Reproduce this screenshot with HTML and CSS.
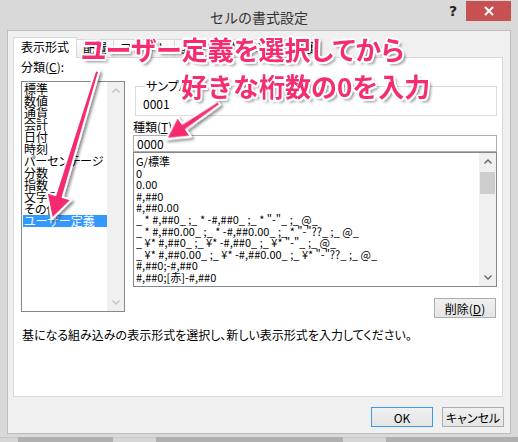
FILE: index.html
```html
<!DOCTYPE html>
<html lang="ja">
<head>
<meta charset="utf-8">
<title>セルの書式設定</title>
<link rel="stylesheet" href="styles.css">
</head>
<body>
<div class="window">
  <div class="titlebar">
    <div class="title">セルの書式設定</div>
    <div class="controls">
      <div class="help">?</div>
      <div class="close">
        <svg width="10" height="10" viewBox="0 0 10 10"><path d="M1 1 L9 9 M9 1 L1 9" stroke="#fff" stroke-width="2" fill="none"/></svg>
      </div>
    </div>
  </div>
  <div class="panel">
    <div class="tabs">
      <div class="tab active">表示形式</div>
      <div class="tab">配置</div>
      <div class="tab">フォント</div>
      <div class="tab">罫線</div>
      <div class="tab">塗りつぶし</div>
      <div class="tab">保護</div>
    </div>
    <div class="tabpage">
      <div class="cols">
        <div class="leftcol">
          <div class="label">分類(<u>C</u>):</div>
          <div class="listbox cat">
            <ul class="items">
              <li>標準</li>
              <li>数値</li>
              <li>通貨</li>
              <li>会計</li>
              <li>日付</li>
              <li>時刻</li>
              <li>パーセンテージ</li>
              <li>分数</li>
              <li>指数</li>
              <li>文字列</li>
              <li>その他</li>
              <li class="sel">ユーザー定義</li>
            </ul>
            <div class="vscroll disabled">
              <div class="arrow"><svg width="8" height="5" viewBox="0 0 8 5"><polyline points="0.5,4.5 4,1 7.5,4.5" fill="none" stroke="#c2c2c2" stroke-width="1.3"/></svg></div>
              <div class="track"></div>
              <div class="arrow"><svg width="8" height="5" viewBox="0 0 8 5"><polyline points="0.5,0.5 4,4 7.5,0.5" fill="none" stroke="#c2c2c2" stroke-width="1.3"/></svg></div>
            </div>
          </div>
        </div>
        <div class="rightcol">
          <fieldset class="sample">
            <legend>サンプル</legend>
            <div class="sample-value">0001</div>
          </fieldset>
          <div class="label type-label">種類(<u>T</u>):</div>
          <div class="textbox">0000</div>
          <div class="listbox fmt">
            <ul class="items">
              <li>G/標準</li>
              <li>0</li>
              <li>0.00</li>
              <li>#,##0</li>
              <li>#,##0.00</li>
              <li>_ * #,##0_ ;_ * -#,##0_ ;_ * "-"_ ;_ @_</li>
              <li>_ * #,##0.00_ ;_ * -#,##0.00_ ;_ * "-"??_ ;_ @_</li>
              <li>_ ¥* #,##0_ ;_ ¥* -#,##0_ ;_ ¥* "-"_ ;_ @_</li>
              <li>_ ¥* #,##0.00_ ;_ ¥* -#,##0.00_ ;_ ¥* "-"??_ ;_ @_</li>
              <li>#,##0;-#,##0</li>
              <li>#,##0;[赤]-#,##0</li>
            </ul>
            <div class="vscroll">
              <div class="arrow"><svg width="8" height="5" viewBox="0 0 8 5"><polyline points="0.5,4.5 4,1 7.5,4.5" fill="none" stroke="#606060" stroke-width="1.3"/></svg></div>
              <div class="thumb"></div>
              <div class="track"></div>
              <div class="arrow"><svg width="8" height="5" viewBox="0 0 8 5"><polyline points="0.5,0.5 4,4 7.5,0.5" fill="none" stroke="#606060" stroke-width="1.3"/></svg></div>
            </div>
          </div>
          <div class="btnrow"><button class="btn">削除(<u>D</u>)</button></div>
        </div>
      </div>
      <p class="desc">基になる組み込みの表示形式を選択し、新しい表示形式を入力してください。</p>
    </div>
    <div class="footer">
      <button class="btn ok">OK</button>
      <button class="btn">キャンセル</button>
    </div>
  </div>
  <div class="frame-bottom"></div>
  <div class="strip">
    <span class="seg s1"></span><span class="gap g1"></span><span class="seg s2"></span><span class="gap g2"></span><span class="seg s3"></span>
  </div>

  <div class="annot line1">ユーザー定義を選択してから</div>
  <div class="annot line2">好きな桁数の0を入力</div>

  <svg class="arrows" width="518" height="442" viewBox="0 0 518 442">
    <defs>
      <filter id="sh" x="-20%" y="-20%" width="140%" height="140%">
        <feDropShadow dx="2" dy="2" stdDeviation="1.5" flood-color="#000" flood-opacity="0.45"/>
      </filter>
    </defs>
    <g filter="url(#sh)" fill="#f52c70" stroke="#fff" stroke-width="2" stroke-linejoin="round">
      <polygon transform="translate(52,219) rotate(107)" points="-155,-2 -24,-3.8 -24,-13 0,0 -24,13 -24,3.8 -155,2"/>
      <polygon transform="translate(166,139) rotate(145.8)" points="-64,-2 -22,-3.6 -22,-12 0,0 -22,12 -22,3.6 -64,2"/>
    </g>
  </svg>
</div>
</body>
</html>
```

FILE: styles.css
```css
* { box-sizing: border-box; }
html, body { margin: 0; padding: 0; }
body {
  width: 518px;
  height: 442px;
  overflow: hidden;
  font-family: "Noto Sans CJK JP", sans-serif;
  font-size: 12px;
  color: #000;
  background: #d9d9d9;
}
.window {
  position: relative;
  width: 518px;
  height: 442px;
  background: #d9d9d9;
  display: flex;
  flex-direction: column;
}
.titlebar {
  flex: none;
  height: 30px;
  display: grid;
  grid-template-columns: 1fr auto 1fr;
}
.title {
  grid-column: 2;
  font-size: 14px;
  line-height: 30px;
  padding-top: 2px;
  color: #333;
}
.controls {
  grid-column: 3;
  display: flex;
  justify-content: flex-end;
  align-items: flex-start;
  padding-right: 7px;
}
.help {
  width: 26px;
  height: 21px;
  text-align: center;
  font: bold 14px/22px "DejaVu Sans", sans-serif;
  color: #222;
}
.close {
  width: 45px;
  height: 20px;
  margin-top: 1px;
  background: #c75050;
  display: flex;
  align-items: center;
  justify-content: center;
}
.close svg { display: block; }

.panel {
  flex: none;
  width: 504px;
  height: 404px;
  margin-left: 7px;
  border: 1px solid #bdbdbd;
  background: #f0f0f0;
  display: flex;
  flex-direction: column;
}
.tabs {
  flex: none;
  display: flex;
  align-items: flex-end;
  height: 20px;
  margin: 6px 0 0 5px;
  position: relative;
  z-index: 1;
}
.tab {
  height: 18px;
  padding: 0 6px;
  border: 1px solid #d9d9d9;
  border-bottom: none;
  margin-right: -1px;
  background: linear-gradient(#fcfcfc, #f0f0f0);
  line-height: 16px;
  font-size: 12px;
  white-space: nowrap;
}
.tab.active {
  height: 21px;
  margin-bottom: -1px;
  background: #fff;
  padding: 0 7px;
  line-height: 18px;
}
.tabpage {
  flex: none;
  height: 340px;
  margin: 0 7px 0 5px;
  border: 1px solid #d9d9d9;
  background: #fff;
}
.cols {
  display: flex;
  gap: 8px;
  padding-left: 7px;
}
.leftcol { width: 104px; flex: none; }
.rightcol { width: 364px; flex: none; display: flex; flex-direction: column; }
.label { line-height: 12px; height: 12px; margin-top: 3px; white-space: nowrap; }
.listbox {
  border: 1px solid #828790;
  background: #fff;
  display: flex;
  overflow: hidden;
}
.listbox.cat { margin-top: 8px; height: 231px; }
.items {
  list-style: none;
  margin: 0;
  flex: 1;
  min-width: 0;
  overflow: hidden;
}
.cat .items { padding: 1px 0 0 0; font-feature-settings: "palt"; }
.cat .items li {
  height: 12px;
  line-height: 12px;
  margin-left: 1px;
  padding-left: 1px;
  white-space: nowrap;
}
.cat .items li.sel { background: #3399ff; color: #fff; }
.vscroll {
  flex: none;
  width: 17px;
  background: #f0f0f0;
  display: flex;
  flex-direction: column;
}
.vscroll .arrow {
  flex: none;
  height: 17px;
  display: flex;
  align-items: center;
  justify-content: center;
}
.vscroll .arrow svg { display: block; }
.vscroll .track { flex: 1; }
.vscroll .thumb { flex: none; height: 22px; margin: 2px 1px 0; background: #cdcdcd; }

.sample {
  margin: 22px 0 0 2px;
  padding: 6px 7px 5px 7px;
  border: 1px solid #dcdcdc;
  min-width: 0;
}
.sample legend {
  padding: 0 1px;
  margin-left: 2px;
  line-height: 12px;
  font-size: 12px;
  font-feature-settings: "palt";
}
.sample-value { line-height: 12px; height: 12px; }
.type-label { margin-top: 5px; }
.textbox {
  margin-top: 2px;
  height: 17px;
  border: 1px solid #abadb3;
  padding-left: 3px;
  line-height: 15px;
  background: #fff;
}
.listbox.fmt { height: 135px; }
.fmt .items { padding: 3px 0 0 2px; font-size: 11px; }
.fmt .items li {
  height: 11.6px;
  line-height: 11.6px;
  white-space: nowrap;
}
.btnrow {
  display: flex;
  justify-content: flex-end;
  margin-top: 11px;
  padding-right: 1px;
}
.btn {
  width: 62px;
  height: 20px;
  padding: 0;
  border: 1px solid #acacac;
  background: linear-gradient(#f0f0f0, #e5e5e5);
  font-family: "Noto Sans CJK JP", sans-serif;
  font-size: 12px;
  line-height: 17px;
  color: #000;
  font-feature-settings: "palt";
}
.desc {
  margin: 11px 0 0 0;
  padding-left: 8px;
  line-height: 12px;
  font-feature-settings: "palt";
  white-space: nowrap;
}
.footer {
  display: flex;
  justify-content: flex-end;
  gap: 9px;
  margin-top: 10px;
  padding-right: 6px;
}
.btn.ok { border-color: #3c9bea; }

.frame-bottom { flex: none; height: 3px; }
.strip {
  flex: none;
  height: 5px;
  background: #b0b0b0;
  display: flex;
}
.strip .seg { background: #d6d6d6; border-top: 1px solid #c8c8c8; }
.strip .s1 { width: 18px; }
.strip .g1 { width: 95px; }
.strip .s2 { width: 43px; }
.strip .g2 { width: 187px; }
.strip .s3 { width: 43px; }

.annot {
  position: absolute;
  color: #f52c70;
  font-weight: 700;
  white-space: nowrap;
  text-shadow:
    2px 0 #fff, -2px 0 #fff, 0 2px #fff, 0 -2px #fff,
    1.5px 1.5px #fff, -1.5px 1.5px #fff, 1.5px -1.5px #fff, -1.5px -1.5px #fff,
    3px 3px 3px rgba(0,0,0,0.45);
  z-index: 3;
}
.line1 {
  left: 81px;
  top: 36px;
  font-size: 26px;
  line-height: 26px;
  font-feature-settings: "palt";
}
.line2 {
  left: 181px;
  top: 73px;
  font-size: 26px;
  line-height: 26px;
}
.arrows {
  position: absolute;
  left: 0;
  top: 0;
  pointer-events: none;
  z-index: 2;
}
```
